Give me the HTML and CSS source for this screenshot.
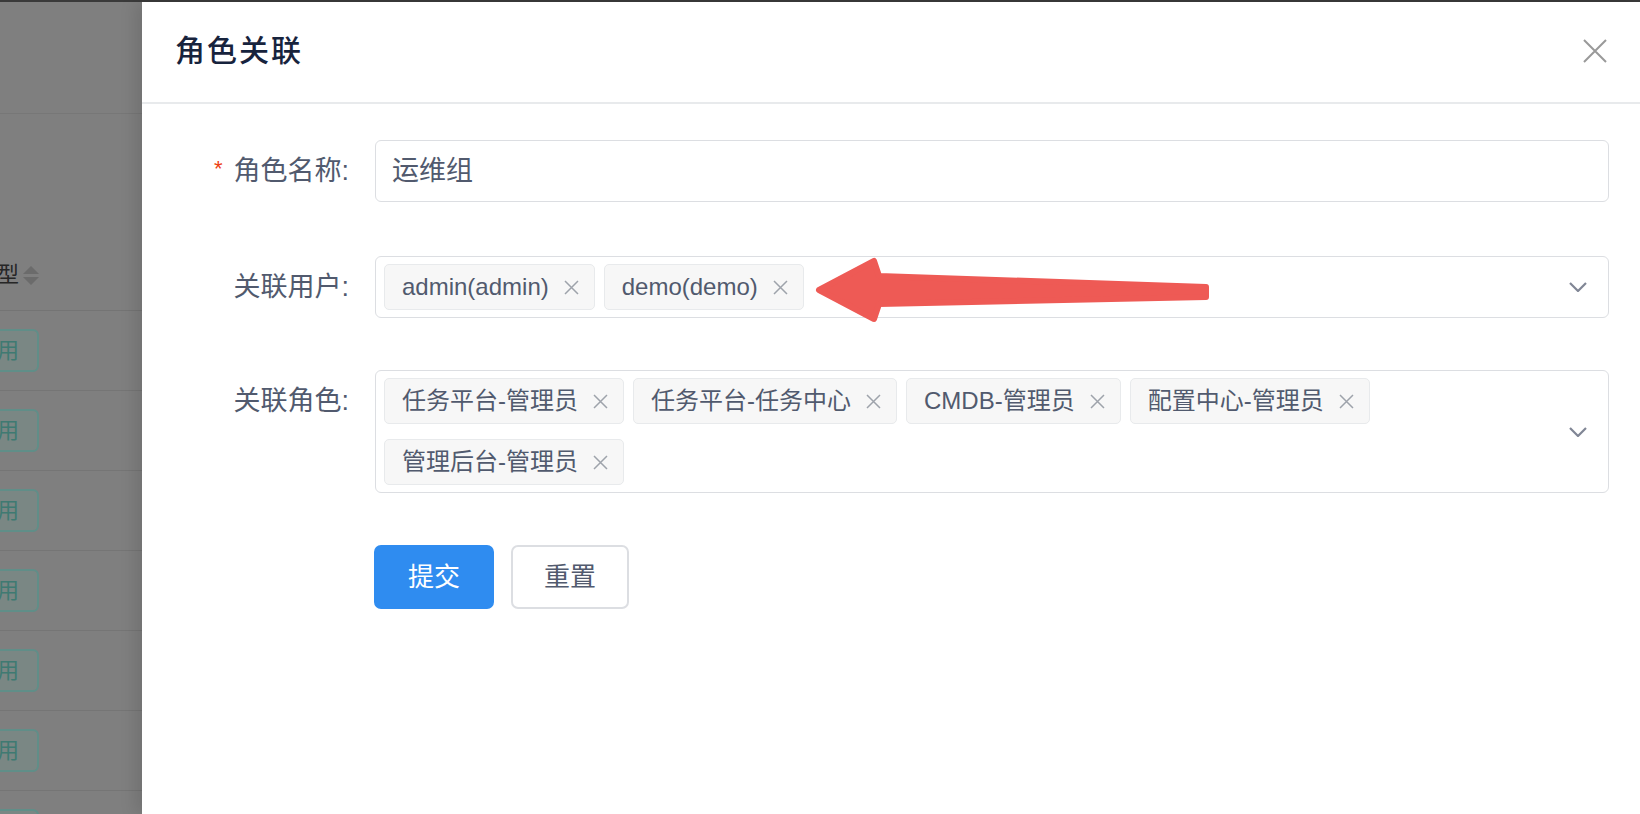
FILE: index.html
```html
<!DOCTYPE html>
<html lang="zh-CN">
<head>
<meta charset="utf-8">
<title>角色关联</title>
<link rel="stylesheet" href="styles.css">
</head>
<body>
<div class="topbar"></div>
<div class="screen">
  <aside class="backdrop">
    <div class="bd-toolbar"></div>
    <div class="bd-filter"></div>
    <div class="bd-head">
      <span class="bd-col">类型</span>
      <span class="sorter"><i class="caret-up"></i><i class="caret-down"></i></span>
    </div>
    <div class="bd-row"><span class="bd-tag">启用</span></div>
    <div class="bd-row"><span class="bd-tag">启用</span></div>
    <div class="bd-row"><span class="bd-tag">启用</span></div>
    <div class="bd-row"><span class="bd-tag">启用</span></div>
    <div class="bd-row"><span class="bd-tag">启用</span></div>
    <div class="bd-row"><span class="bd-tag">启用</span></div>
    <div class="bd-row"><span class="bd-tag">启用</span></div>
  </aside>

  <section class="drawer">
    <header class="drawer-header">
      <h2 class="drawer-title">角色关联</h2>
      <button class="drawer-close" type="button" aria-label="关闭">
        <svg width="24" height="24" viewBox="0 0 24 24"><path d="M1 1L23 23M23 1L1 23" stroke="#999" stroke-width="2" fill="none"/></svg>
      </button>
    </header>

    <form class="form">
      <div class="form-item">
        <label class="label required">角色名称:</label>
        <div class="control"><div class="input">运维组</div></div>
      </div>

      <div class="form-item">
        <label class="label">关联用户:</label>
        <div class="control">
          <div class="select">
            <div class="tags">
              <span class="tag">admin(admin)<svg class="tag-x" width="15" height="15" viewBox="0 0 15 15"><path d="M1 1L14 14M14 1L1 14"/></svg></span>
              <span class="tag">demo(demo)<svg class="tag-x" width="15" height="15" viewBox="0 0 15 15"><path d="M1 1L14 14M14 1L1 14"/></svg></span>
            </div>
            <svg class="chevron" width="18" height="10" viewBox="0 0 18 10"><path d="M1 1L9 9L17 1"/></svg>
          </div>
        </div>
      </div>

      <div class="form-item">
        <label class="label">关联角色:</label>
        <div class="control">
          <div class="select">
            <div class="tags">
              <span class="tag">任务平台-管理员<svg class="tag-x" width="15" height="15" viewBox="0 0 15 15"><path d="M1 1L14 14M14 1L1 14"/></svg></span>
              <span class="tag">任务平台-任务中心<svg class="tag-x" width="15" height="15" viewBox="0 0 15 15"><path d="M1 1L14 14M14 1L1 14"/></svg></span>
              <span class="tag">CMDB-管理员<svg class="tag-x" width="15" height="15" viewBox="0 0 15 15"><path d="M1 1L14 14M14 1L1 14"/></svg></span>
              <span class="tag">配置中心-管理员<svg class="tag-x" width="15" height="15" viewBox="0 0 15 15"><path d="M1 1L14 14M14 1L1 14"/></svg></span>
              <span class="tag">管理后台-管理员<svg class="tag-x" width="15" height="15" viewBox="0 0 15 15"><path d="M1 1L14 14M14 1L1 14"/></svg></span>
            </div>
            <svg class="chevron" width="18" height="10" viewBox="0 0 18 10"><path d="M1 1L9 9L17 1"/></svg>
          </div>
        </div>
      </div>

      <div class="actions">
        <button type="button" class="btn btn-primary">提交</button>
        <button type="button" class="btn">重置</button>
      </div>
    </form>
  </section>
</div>

<svg class="annotation" width="1640" height="814" viewBox="0 0 1640 814">
  <path d="M819 290 L874 261 L879 276 L1206 287 L1206 297 L879 304 L874 319 Z" fill="#ee5a55" stroke="#ee5a55" stroke-width="6" stroke-linejoin="round"/>
</svg>
</body>
</html>
```

FILE: styles.css
```css
* { box-sizing: border-box; }

html, body {
  margin: 0;
  padding: 0;
  width: 1640px;
  height: 814px;
  overflow: hidden;
  background: #ffffff;
  font-family: "Liberation Sans", "Noto Sans CJK SC", sans-serif;
  color: #515a6e;
}

.topbar {
  height: 2px;
  background: #3a3a3a;
}

.screen {
  display: flex;
  height: 812px;
}

/* dimmed page behind the drawer */
.backdrop {
  width: 142px;
  flex: none;
  background: #7f7f7f;
  overflow: hidden;
  display: flex;
  flex-direction: column;
}

.bd-toolbar {
  height: 112px;
  flex: none;
  border-bottom: 1px solid #777777;
}

.bd-filter {
  height: 126px;
  flex: none;
}

.bd-head {
  height: 71px;
  flex: none;
  border-bottom: 1px solid #747474;
  display: flex;
  align-items: center;
  gap: 4px;
}

.bd-col {
  margin-left: -25px;
  font-size: 22px;
  line-height: 26px;
  font-weight: 400;
  color: #262626;
  white-space: nowrap;
}

.sorter {
  display: flex;
  flex-direction: column;
  gap: 3px;
}

.caret-up, .caret-down {
  display: block;
  width: 0;
  height: 0;
  border-left: 8px solid transparent;
  border-right: 8px solid transparent;
}
.caret-up { border-bottom: 8px solid #6b6b6b; }
.caret-down { border-top: 8px solid #6b6b6b; }

.bd-row {
  height: 80px;
  flex: none;
  border-bottom: 1px solid #757575;
  display: flex;
  align-items: center;
}

.bd-tag {
  margin-left: -45px;
  height: 43px;
  padding: 0 18px;
  border: 2px solid #608e88;
  border-radius: 6px;
  background: #7a8784;
  color: #3f7a72;
  font-size: 22px;
  line-height: 39px;
  white-space: nowrap;
}

/* drawer */
.drawer {
  flex: 1;
  background: #ffffff;
  position: relative;
  z-index: 1;
  box-shadow: -8px 0 14px rgba(0, 0, 0, 0.10);
  display: flex;
  flex-direction: column;
}

.drawer-header {
  height: 102px;
  flex: none;
  border-bottom: 2px solid #e8eaec;
  padding: 0 33px 2px 33px;
  display: flex;
  align-items: center;
  justify-content: space-between;
}

.drawer-title {
  margin: 0;
  font-size: 30px;
  line-height: 40px;
  font-weight: 500;
  color: #17233d;
  letter-spacing: 2px;
}

.drawer-close {
  width: 24px;
  height: 24px;
  padding: 0;
  border: 0;
  background: none;
  display: flex;
}

.form {
  padding: 36px 31px 0 0;
  display: flex;
  flex-direction: column;
  gap: 52px;
}

.form-item {
  display: flex;
  align-items: flex-start;
}

.form-item:first-child {
  margin-bottom: 2px;
}

.label {
  width: 233px;
  flex: none;
  padding-right: 26px;
  text-align: right;
  font-size: 27px;
  line-height: 62px;
  color: #515a6e;
  white-space: nowrap;
}

.label.required::before {
  content: "*";
  display: inline-block;
  margin-right: 11px;
  font-family: "Liberation Sans", sans-serif;
  font-size: 22px;
  color: #ed4014;
  vertical-align: top;
  line-height: 58px;
}

.control {
  flex: 1;
  min-width: 0;
}

.input {
  height: 62px;
  border: 1px solid #dcdee2;
  border-radius: 6px;
  padding: 0 16px;
  font-size: 27px;
  line-height: 60px;
  color: #515a6e;
}

.select {
  min-height: 62px;
  border: 1px solid #dcdee2;
  border-radius: 6px;
  padding: 7px 0 7px 8px;
  display: flex;
  align-items: center;
}

.tags {
  flex: 1;
  display: flex;
  flex-wrap: wrap;
  gap: 15px 9px;
}

.tag {
  height: 46px;
  border: 1px solid #e8eaec;
  border-radius: 5px;
  background: #f7f7f7;
  padding: 0 15px 0 17px;
  display: inline-flex;
  align-items: center;
  gap: 15px;
  font-size: 24px;
  line-height: 30px;
  color: #515a6e;
  white-space: nowrap;
}

.tag-x {
  flex: none;
  fill: none;
  stroke: #9ea3ab;
  stroke-width: 1.5;
}

.chevron {
  flex: none;
  margin: 0 21px 0 12px;
  fill: none;
  stroke: #808695;
  stroke-width: 2.2;
}

.actions {
  display: flex;
  gap: 17px;
  padding-left: 232px;
}

.btn {
  height: 64px;
  width: 118px;
  border: 2px solid #dcdee2;
  border-radius: 7px;
  background: #ffffff;
  color: #515a6e;
  font-family: "Liberation Sans", "Noto Sans CJK SC", sans-serif;
  font-size: 26px;
  line-height: 60px;
  padding: 0;
}

.btn-primary {
  width: 120px;
  background: #2f8cf0;
  border-color: #2f8cf0;
  color: #ffffff;
}

.annotation {
  position: absolute;
  left: 0;
  top: 0;
  z-index: 2;
  pointer-events: none;
}
```
